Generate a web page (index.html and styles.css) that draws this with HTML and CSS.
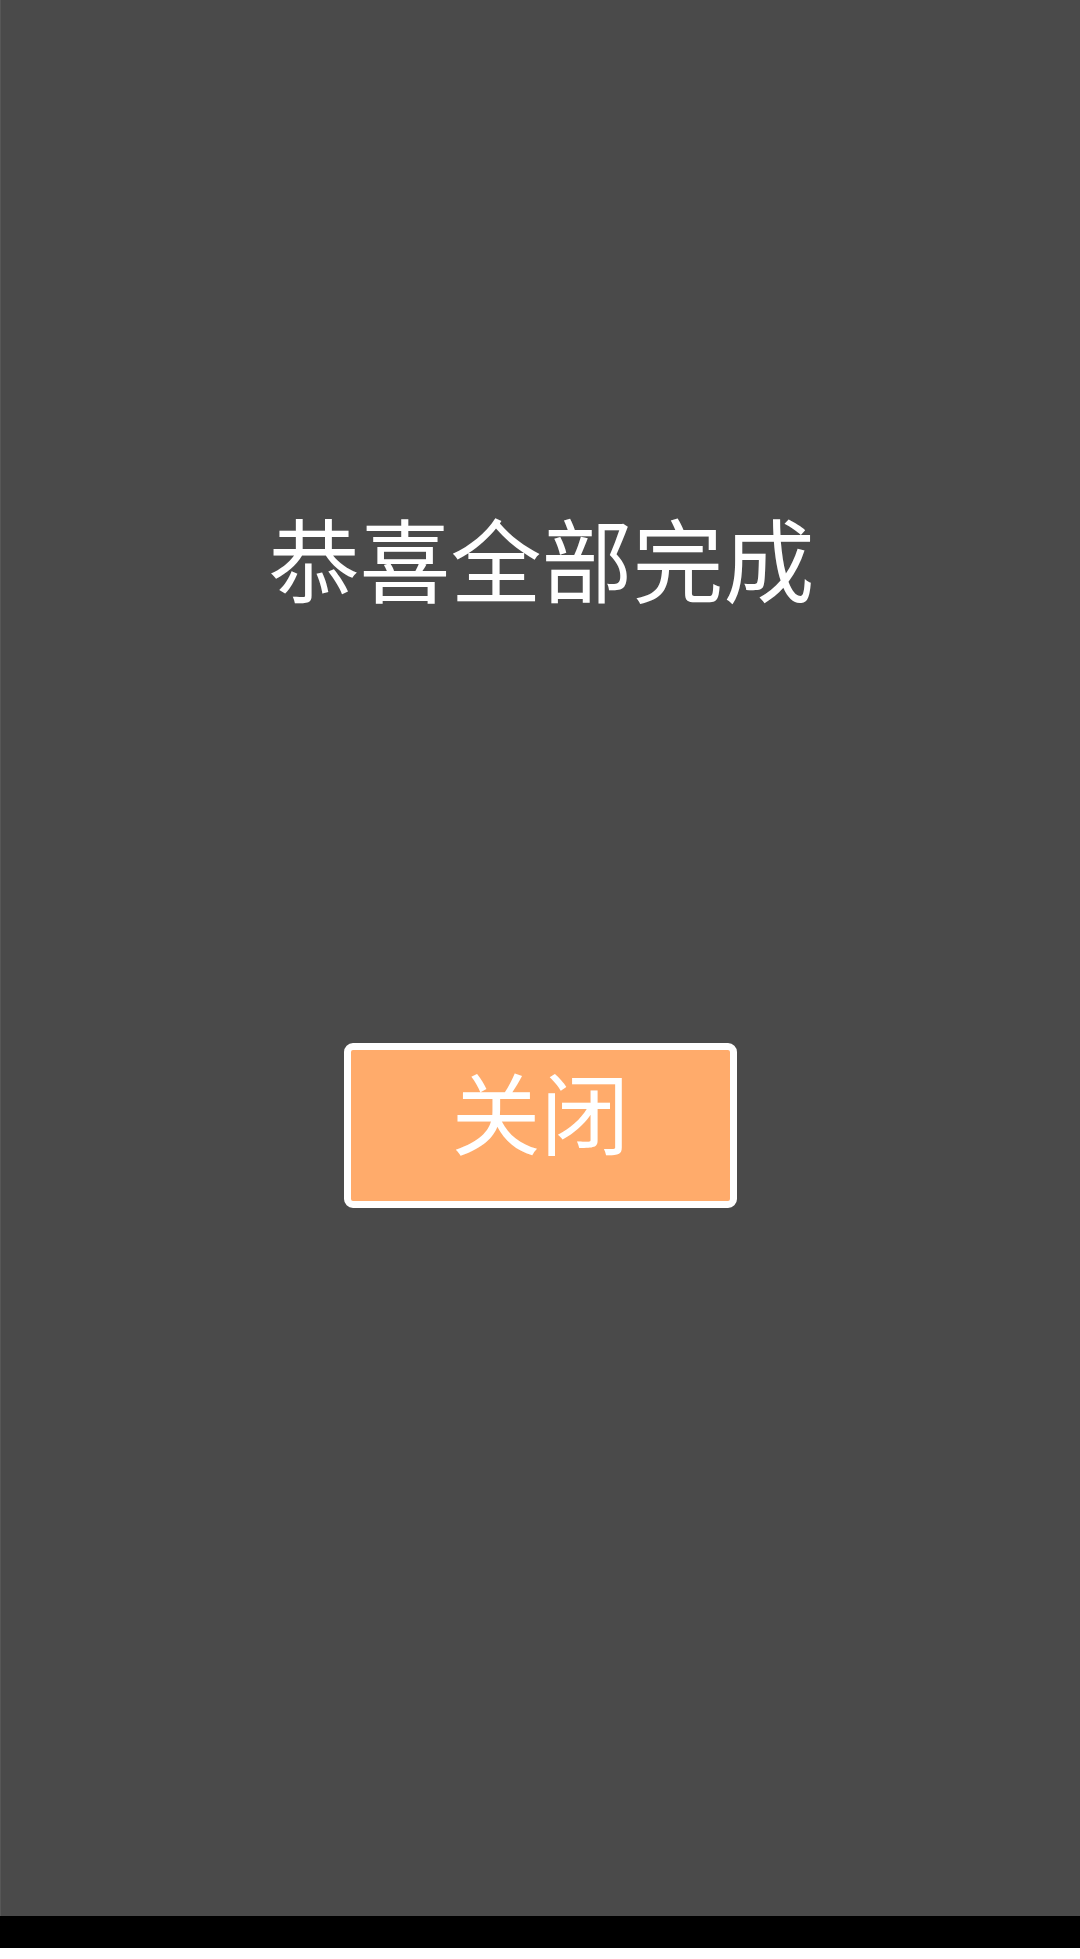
FILE: index.html
```html
<!DOCTYPE html>
<html lang="zh-CN">
<head>
<meta charset="utf-8">
<title>恭喜全部完成</title>
<link rel="stylesheet" href="styles.css">
</head>
<body>
<div class="screen">
  <main class="stage">
    <h1 class="title">恭喜全部完成</h1>
    <button class="close-btn" type="button">关闭</button>
  </main>
  <div class="navbar"></div>
  <div class="bottom-strip"></div>
</div>
</body>
</html>
```

FILE: styles.css
```css
html, body {
  margin: 0;
  padding: 0;
  background: #ffffff;
}

.screen {
  width: 1080px;
  height: 1959px;
  display: flex;
  flex-direction: column;
}

.stage {
  flex: 0 0 1916px;
  background: #4a4a4a;
  border-left: 1px solid #575757;
  box-sizing: border-box;
  display: flex;
  flex-direction: column;
  align-items: center;
}

.title {
  margin: 510px 0 0 0;
  font-family: "Noto Sans CJK SC", "Noto Sans", sans-serif;
  font-weight: 400;
  font-size: 91px;
  line-height: 92px;
  color: #ffffff;
  letter-spacing: 0;
  padding-left: 2px;
}

.close-btn {
  margin-top: 441px;
  width: 393px;
  height: 165px;
  box-sizing: border-box;
  border: 7px solid #ffffff;
  border-radius: 9px;
  background: #ffab6b;
  color: #ffffff;
  font-family: "Noto Sans CJK SC", "Noto Sans", sans-serif;
  font-size: 89px;
  line-height: 1;
  padding: 0 0 32px 0;
  display: flex;
  align-items: center;
  justify-content: center;
}

.navbar {
  flex: 0 0 32px;
  background: #000000;
}

.bottom-strip {
  flex: 1 1 auto;
  background: #ffffff;
}
```
